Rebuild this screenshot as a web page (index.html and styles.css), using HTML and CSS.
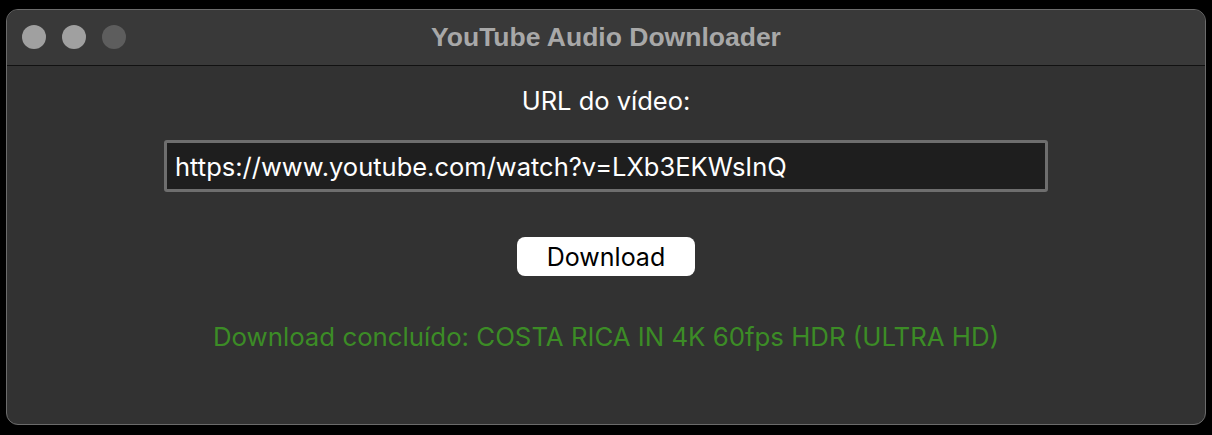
FILE: index.html
```html
<!DOCTYPE html>
<html lang="pt">
<head>
<meta charset="utf-8">
<title>YouTube Audio Downloader</title>
<link rel="stylesheet" href="styles.css">
</head>
<body>
<div class="window">
  <div class="titlebar">
    <div class="lights">
      <span class="light"></span>
      <span class="light"></span>
      <span class="light off"></span>
    </div>
    <div class="title">YouTube Audio Downloader</div>
  </div>
  <div class="content">
    <label class="label" for="url">URL do vídeo:</label>
    <input id="url" class="url" type="text" value="https://www.youtube.com/watch?v=LXb3EKWsInQ">
    <button class="btn">Download</button>
    <div class="status">Download concluído: COSTA RICA IN 4K 60fps HDR (ULTRA HD)</div>
  </div>
</div>
</body>
</html>
```
FILE: styles.css
```css
html, body {
  margin: 0;
  padding: 0;
  background: #000;
  height: 100%;
}
body {
  padding: 9px 6px 0 6px;
  box-sizing: border-box;
  font-family: Inter, "Liberation Sans", sans-serif;
}
.window {
  width: 1200px;
  height: 416px;
  box-sizing: border-box;
  border: 1px solid #6b6b6b;
  border-radius: 12px;
  background: #323232;
  overflow: hidden;
  display: flex;
  flex-direction: column;
}
.titlebar {
  height: 55px;
  background: #393939;
  border-bottom: 1px solid #111;
  position: relative;
  display: flex;
  align-items: center;
  justify-content: center;
  flex-shrink: 0;
}
.lights {
  position: absolute;
  left: 15px;
  top: 15px;
  display: flex;
  gap: 16px;
}
.light {
  width: 24px;
  height: 24px;
  border-radius: 50%;
  background: #a0a0a0;
}
.light.off {
  background: #5d5d5d;
}
.title {
  color: #a8a8a8;
  font-family: "Liberation Sans", Arial, sans-serif;
  font-weight: bold;
  font-size: 26.5px;
  margin-top: -1px;
}
.content {
  display: flex;
  flex-direction: column;
  align-items: center;
  padding-top: 20px;
}
.label {
  color: #fff;
  font-size: 25.5px;
  line-height: 30px;
}
.url {
  margin-top: 24px;
  width: 884px;
  height: 52px;
  flex-shrink: 0;
  box-sizing: border-box;
  border: 3px solid #6e6e6e;
  border-radius: 3px;
  background: #1e1e1e;
  color: #fff;
  font-family: Inter, "Liberation Sans", sans-serif;
  font-size: 25.5px;
  padding: 0 8px;
  outline: none;
}
.btn {
  margin-top: 45px;
  width: 178px;
  height: 39px;
  flex-shrink: 0;
  border: none;
  border-radius: 8px;
  background: #fff;
  color: #000;
  font-family: Inter, "Liberation Sans", sans-serif;
  font-size: 25px;
  padding: 0;
}
.status {
  margin-top: 46px;
  color: #3c8c26;
  font-size: 25.8px;
  line-height: 30px;
}
```
